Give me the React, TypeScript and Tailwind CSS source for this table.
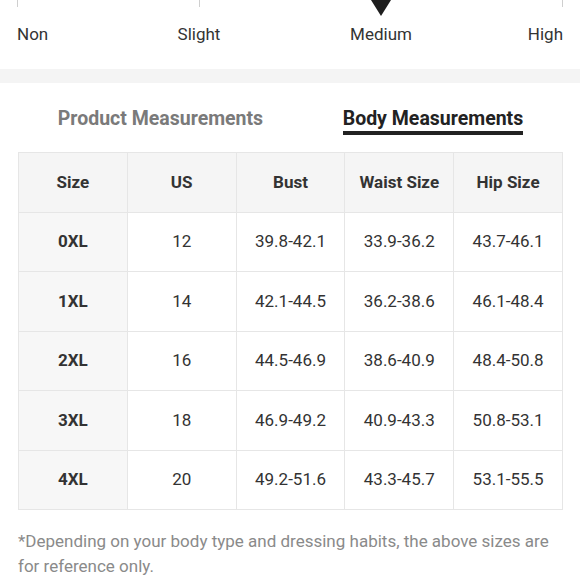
import React from "react";

const rows = [
  ["0XL", "12", "39.8-42.1", "33.9-36.2", "43.7-46.1"],
  ["1XL", "14", "42.1-44.5", "36.2-38.6", "46.1-48.4"],
  ["2XL", "16", "44.5-46.9", "38.6-40.9", "48.4-50.8"],
  ["3XL", "18", "46.9-49.2", "40.9-43.3", "50.8-53.1"],
  ["4XL", "20", "49.2-51.6", "43.3-45.7", "53.1-55.5"],
];
const headers = ["Size", "US", "Bust", "Waist Size", "Hip Size"];

export default function App() {
  return (
    <div
      className="w-[580px] h-[580px] overflow-hidden bg-white text-[#333]"
      style={{ fontFamily: "Roboto, 'Liberation Sans', sans-serif" }}
    >
      {/* slider scale */}
      <div className="h-[69px]">
        <div className="flex justify-between px-[17px] h-[16px] items-start">
          <div className="w-px h-[7px] bg-[#cfcfcf]" />
          <div className="w-px h-[7px] bg-[#cfcfcf]" />
          <div className="w-0 flex justify-center">
            <svg width="20" height="16" viewBox="0 0 20 16" className="shrink-0">
              <polygon points="0,0 20,0 10,16" fill="#1e1e1e" />
            </svg>
          </div>
          <div className="w-px h-[7px] bg-[#cfcfcf]" />
        </div>
        <div className="flex justify-between px-[17px] mt-[6px] text-[17px] leading-6 text-[#333]">
          <div className="w-0 flex justify-start">
            <span className="whitespace-nowrap">Non</span>
          </div>
          <div className="w-0 flex justify-center">
            <span className="whitespace-nowrap">Slight</span>
          </div>
          <div className="w-0 flex justify-center">
            <span className="whitespace-nowrap">Medium</span>
          </div>
          <div className="w-0 flex justify-end">
            <span className="whitespace-nowrap">High</span>
          </div>
        </div>
      </div>
      <div className="h-[14px] bg-[#f4f4f4]" />

      {/* tabs */}
      <div className="ml-[18px] w-[545px] flex justify-around pt-[24px] text-[19.5px] leading-6 font-bold">
        <div className="text-[#7a7a7a] border-b-4 border-transparent">Product Measurements</div>
        <div className="text-[#222] border-b-4 border-[#222]">Body Measurements</div>
      </div>

      {/* table */}
      <div className="ml-[18px] mt-[17px] w-[545px] border-t border-l border-[#e6e6e6] grid grid-cols-5 text-[17px]">
        {headers.map((h) => (
          <div
            key={h}
            className="h-[59.5px] flex items-center justify-center bg-[#f5f5f5] border-r border-b border-[#e6e6e6] font-bold text-[#333]"
          >
            {h}
          </div>
        ))}
        {rows.map((r) =>
          r.map((c, i) => (
            <div
              key={r[0] + i}
              className={
                i === 0
                  ? "h-[59.5px] flex items-center justify-center bg-[#f7f7f7] border-r border-b border-[#e6e6e6] font-bold text-[#333]"
                  : "h-[59.5px] flex items-center justify-center bg-white border-r border-b border-[#e6e6e6] text-[#333]"
              }
            >
              {c}
            </div>
          ))
        )}
      </div>

      {/* note */}
      <div className="ml-[18px] mr-[18px] mt-[19px] text-[17px] leading-[25px] text-[#8a8a8a]">
        *Depending on your body type and dressing habits, the above sizes are for reference only.
      </div>
    </div>
  );
}
